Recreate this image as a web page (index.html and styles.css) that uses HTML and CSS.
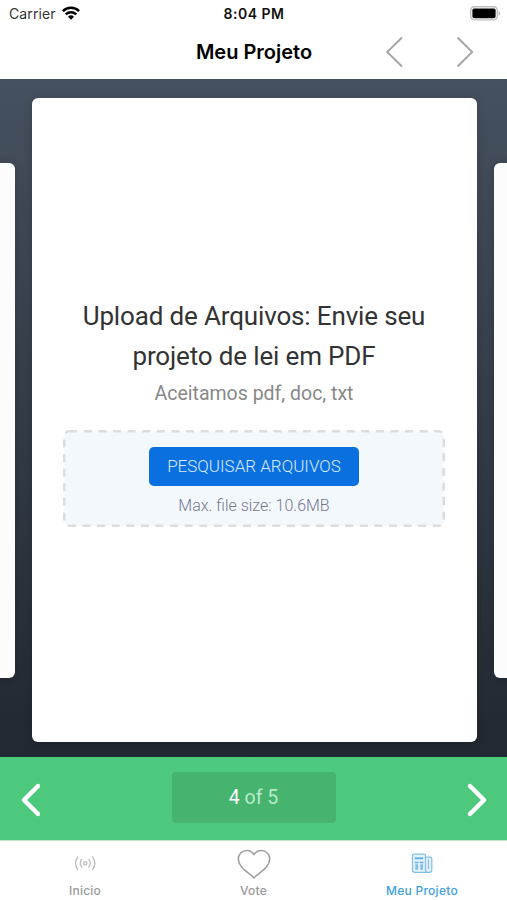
FILE: index.html
```
<!DOCTYPE html>
<html lang="pt-BR">
<head>
    <meta charset="UTF-8">
    <meta name="viewport" content="width=device-width, initial-scale=1.0">
    <title>Meu Projeto</title>
    <link rel="stylesheet" href="styles.css">
</head>
<body>
    <div class="app">
        <div class="status">
            <div class="carrier">
                <span class="carrier-name">Carrier</span>
                <svg class="wifi" width="18" height="14" viewBox="0 0 18 14" fill="none" stroke="#000" stroke-width="2.5">
                    <path d="M.9 5.2a11.5 11.5 0 0 1 16.2 0"/>
                    <path d="M3.8 8.4a7.4 7.4 0 0 1 10.4 0"/>
                    <path d="M9 13.8 6 10.8a4.3 4.3 0 0 1 6 0z" fill="#000" stroke="none"/>
                </svg>
            </div>
            <span class="clock">8:04 PM</span>
            <svg class="battery" width="31" height="15" viewBox="0 0 31 15">
                <rect x=".7" y=".7" width="26.6" height="13.2" rx="3.6" fill="#fff" stroke="#bdbdbd" stroke-width="1.4"/>
                <rect x="2.4" y="2.4" width="23.2" height="9.8" rx="1.8" fill="#000"/>
                <path d="M28.6 5v5q1.7-.8 1.7-2.5T28.6 5z" fill="#bdbdbd"/>
            </svg>
        </div>

        <div class="navbar">
            <h1>Meu Projeto</h1>
            <div class="nav-arrows">
                <svg width="18" height="32" viewBox="0 0 18 32"><path d="M17 1.500 2.200 16 17 30.500"/></svg>
                <svg width="18" height="32" viewBox="0 0 18 32"><path d="M1.5 1.5 16.2 16 1.5 30.5"/></svg>
            </div>
        </div>

        <div class="stage">
            <div class="card card-side"></div>
            <div class="card card-main">
                <h2>Upload de Arquivos: Envie seu<br>projeto de lei em PDF</h2>
                <p class="hint">Aceitamos pdf, doc, txt</p>
                <div class="dropzone">
                    <svg class="dash" width="382" height="97">
                        <rect x="1.25" y="1.25" width="379.5" height="94.5" rx="5"/>
                    </svg>
                    <button type="button">PESQUISAR ARQUIVOS</button>
                    <p class="max-size">Max. file size: 10.6MB</p>
                </div>
            </div>
            <div class="card card-side"></div>
        </div>

        <div class="pager">
            <svg width="20" height="34" viewBox="0 0 20 34"><path d="M18 3 4 17l14 14"/></svg>
            <div class="pager-count"><b>4</b> of 5</div>
            <svg width="20" height="34" viewBox="0 0 20 34"><path d="M3 3l14 14L3 31"/></svg>
        </div>

        <div class="tabs">
            <div class="tab">
                <svg width="34" height="32" viewBox="0 0 34 32" fill="none" stroke="#bcbcbc" stroke-width="1.3" stroke-linecap="round">
                    <circle cx="17.3" cy="16.3" r="1.6"/>
                    <path d="M13.800 12.400q-3.200 3.900 0 7.800M20.800 12.400q3.200 3.900 0 7.800M9.800 9.800q-4.600 6.500 0 13M24.600 9.800q4.600 6.500 0 13"/>
                </svg>
                <span>Inicio</span>
            </div>
            <div class="tab">
                <svg width="34" height="32" viewBox="0 0 34 32" fill="none" stroke="#a0a0a0" stroke-width="1.6" stroke-linejoin="round">
                    <path d="M17 7.500C15.200 5 12.600 3.500 9.900 3.500 4.800 3.500 1.300 7.300 1.300 12.100c0 7.700 8.500 12.300 15.700 18.700 7.200-6.400 15.700-11 15.700-18.700 0-4.800-3.500-8.600-8.600-8.600-2.700 0-5.300 1.500-7.100 4z"/>
                </svg>
                <span>Vote</span>
            </div>
            <div class="tab active">
                <svg width="34" height="32" viewBox="0 0 34 32" fill="none" stroke="#83bfe8" stroke-width="1.2">
                    <path d="M20.5 10V8.700q0-1.500-1.500-1.500H9q-1.500 0-1.500 1.500V23q0 2.300 2.300 2.300h14.700q2.300 0 2.300-2.300V12.500q0-2.300-2.300-2.300h-4z" fill="#e6f2fb"/>
                    <path d="M20.500 10v13q0 2.300 2 2.300"/>
                    <path d="M23.500 12.500v9.500"/>
                    <path d="M9.800 11.300h8.400" stroke-width="1.9" stroke="#5fade2"/>
                    <path d="M9.800 15.600h3.700M14.800 15.600h3.700" stroke-width="1.500" stroke="#5fade2"/>
                    <path d="M11.700 17.300v5.500M16.700 17.300v5.500" stroke-width="2.800"/>
                </svg>
                <span>Meu Projeto</span>
            </div>
        </div>
    </div>
</body>
</html>
```
FILE: styles.css
```
* {
    box-sizing: border-box;
}

body {
    margin: 0;
    font-family: Inter, 'Liberation Sans', sans-serif;
    background: #fff;
}

h1, h2, p {
    margin: 0;
    font-weight: normal;
}

svg {
    display: block;
    flex-shrink: 0;
}

.app {
    display: flex;
    flex-direction: column;
    width: 507px;
    height: 900px;
    overflow: hidden;
}

/* status bar */
.status {
    display: grid;
    grid-template-columns: 1fr auto 1fr;
    align-items: center;
    height: 27px;
    padding: 0 6px 0 9px;
}

.carrier {
    display: flex;
    align-items: center;
    gap: 6px;
}

.carrier-name {
    font-size: 14px;
    letter-spacing: 0.1px;
    color: #333;
}

.wifi {
    margin-top: -2px;
}

.clock {
    margin-left: -2px;
    font-size: 14px;
    font-weight: 600;
    letter-spacing: 0.5px;
    color: #111;
}

.battery {
    justify-self: end;
}

/* title bar */
.navbar {
    display: grid;
    grid-template-columns: 1fr auto 1fr;
    align-items: center;
    height: 52px;
    padding: 0 0 2px 1px;
}

.navbar h1 {
    grid-column: 2;
    font-size: 20px;
    font-weight: 600;
    color: #000;
}

.nav-arrows {
    display: flex;
    justify-content: flex-end;
    gap: 53px;
    padding-right: 33px;
}

.nav-arrows path {
    fill: none;
    stroke: #a5a5a5;
    stroke-width: 1.9;
}

/* carousel */
.stage {
    display: flex;
    justify-content: center;
    align-items: center;
    gap: 17px;
    height: 678px;
    padding: 4px 0 0 1px;
    background: linear-gradient(#46515f, #222831);
    overflow: hidden;
}

.card {
    flex: none;
    width: 445px;
    border-radius: 6px;
    background: #fff;
    box-shadow: 0 1px 10px rgba(0, 0, 0, 0.2);
}

.card-side {
    height: 515px;
    background: #fcfcfc;
}

.card-main {
    display: flex;
    flex-direction: column;
    align-items: center;
    height: 644px;
    padding-top: 198px;
    font-family: Roboto, sans-serif;
    text-align: center;
    white-space: nowrap;
}

.card-main h2 {
    font-size: 26px;
    line-height: 40px;
    letter-spacing: -0.15px;
    color: #333;
}

.hint {
    font-size: 19.5px;
    line-height: 35px;
    color: #888;
}

.dropzone {
    position: relative;
    display: flex;
    flex-direction: column;
    align-items: center;
    width: 382px;
    height: 97px;
    margin-top: 19px;
    padding-top: 17px;
}

.dash {
    position: absolute;
    inset: 0;
}

.dash rect {
    fill: #f3f8fc;
    stroke: #dcdddf;
    stroke-width: 2.5;
    stroke-dasharray: 8 6.6;
}

.dropzone button {
    position: relative;
    width: 210px;
    height: 39px;
    padding: 0 0 2px;
    border: none;
    border-radius: 5px;
    background: #0b70df;
    color: #d9ebff;
    font-family: Roboto, sans-serif;
    font-size: 17px;
    font-weight: 300;
}

.max-size {
    position: relative;
    margin-top: 10px;
    font-size: 16px;
    font-weight: 300;
    line-height: 20px;
    color: #76768f;
}

/* green pager */
.pager {
    display: flex;
    justify-content: space-between;
    align-items: center;
    height: 83px;
    padding: 0 20px;
    background: #4dc97d;
}

.pager svg {
    margin-top: 2px;
}

.pager path {
    fill: none;
    stroke: #fff;
    stroke-width: 4.4;
    stroke-linecap: round;
    stroke-linejoin: round;
}

.pager-count {
    width: 164px;
    height: 51px;
    margin-top: -2px;
    border-radius: 4px;
    background: #46b36f;
    font-family: Roboto, sans-serif;
    font-size: 19.5px;
    line-height: 51px;
    text-align: center;
    color: #b5ebc8;
}

.pager-count b {
    font-weight: 400;
    color: #fff;
}

/* bottom tabs */
.tabs {
    display: grid;
    grid-template-columns: repeat(3, 168.5px);
    justify-content: center;
    height: 60px;
    padding-top: 6px;
    border-top: 1px solid #b9e4ca;
}

.tab {
    display: flex;
    flex-direction: column;
    align-items: center;
    font-size: 12px;
    font-weight: 500;
    line-height: 16px;
    letter-spacing: 0.25px;
    color: #999;
}

.tab span {
    margin-top: 4px;
}

.active {
    color: #409fdd;
}
```
